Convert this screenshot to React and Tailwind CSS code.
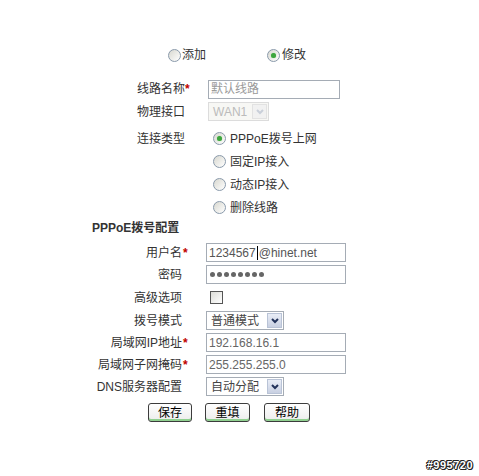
import React from "react";

const font = "font-['Liberation_Sans','Noto_Sans_CJK_SC',sans-serif]";

const Radio = ({ checked }) => (
  <span className="inline-flex h-[13px] w-[13px] shrink-0 items-center justify-center rounded-full border border-[#8a9aab] bg-gradient-to-br from-[#d8d8d0] to-white">
    {checked && <span className="h-[5px] w-[5px] rounded-full bg-[#3da53d] shadow-[0_0_1px_#7c7]" />}
  </span>
);

const Arrow = ({ disabled }) => (
  <span
    className={
      "flex h-[15px] w-[15px] items-center justify-center border " +
      (disabled ? "border-[#e2e2e2] bg-[#f1f1f1]" : "border-[#b9c3d6] bg-gradient-to-b from-[#e9edf6] to-[#c8d0e2]")
    }
  >
    <svg width="8" height="6" viewBox="0 0 8 6">
      <polyline
        points="1,1 4,4 7,1"
        fill="none"
        stroke={disabled ? "#c9cfd9" : "#22325a"}
        strokeWidth="2"
      />
    </svg>
  </span>
);

const Select = ({ value, width, disabled }) => (
  <div
    className={
      "flex h-[19px] items-center justify-between border pl-[4px] pr-[1px] " +
      (disabled ? "border-[#dcdcdc] bg-[#f7f7f4] text-[#bbbbbb]" : "border-[#a5acb5] bg-white text-[#444]")
    }
    style={{ width }}
  >
    <span className="text-[12px] leading-none">{value}</span>
    <Arrow disabled={disabled} />
  </div>
);

const Field = ({ children, width = 140, color = "text-[#555]" }) => (
  <div
    className={"flex h-[19px] items-center border border-[#a5acb5] bg-white pl-[2px] text-[12px] " + color}
    style={{ width }}
  >
    {children}
  </div>
);

const Star = ({ hidden }) => (
  <span className={"ml-[1px] inline-block w-[9px] text-left font-bold text-[#c00000] " + (hidden ? "invisible" : "")}>*</span>
);

const Row = ({ label, req, top, children }) => (
  <div className={"flex h-[19px] items-center " + top}>
    <div className="w-[192px] whitespace-nowrap text-right">
      {label}
      <Star hidden={!req} />
    </div>
    <div className="ml-[14px]">{children}</div>
  </div>
);

const Button = ({ label, w }) => (
  <button
    className="flex h-[19px] items-center justify-center rounded-[3px] border border-[#3c3c3c] bg-gradient-to-b from-white to-[#ececec] text-[12px] text-black shadow-[inset_0_-2px_0_#8fd08f]"
    style={{ width: w }}
  >
    {label}
  </button>
);

export default function App() {
  return (
    <div className={"relative h-[476px] w-[479px] overflow-hidden bg-white text-[12px] text-[#333] " + font}>
      {/* action choice */}
      <div className="mt-[48px] flex h-[14px] items-center pl-[168px]">
        <div className="flex w-[99px] items-center gap-[1px]">
          <Radio />
          <span>添加</span>
        </div>
        <div className="flex items-center gap-[2px]">
          <Radio checked />
          <span>修改</span>
        </div>
      </div>

      {/* line */}
      <div className="mt-[18px] pl-[137px]">
        <div className="flex h-[18px] items-center">
          <div className="w-[71px] whitespace-nowrap">
            线路名称<span className="font-bold text-[#c00000]">*</span>
          </div>
          <Field width={132} color="text-[#9a9a9a]">默认线路</Field>
        </div>
        <div className="mt-[4px] flex h-[19px] items-center">
          <div className="w-[71px]">物理接口</div>
          <Select value="WAN1" width={61} disabled />
        </div>
        <div className="mt-[6px] flex">
          <div className="flex h-[23px] w-[76px] items-center">连接类型</div>
          <div className="flex flex-col">
            {[
              ["PPPoE拨号上网", true],
              ["固定IP接入", false],
              ["动态IP接入", false],
              ["删除线路", false],
            ].map(([t, c]) => (
              <div key={t} className="flex h-[23px] items-center gap-[4px]">
                <Radio checked={c} />
                <span>{t}</span>
              </div>
            ))}
          </div>
        </div>
      </div>

      {/* PPPoE */}
      <div className="mt-[3px] flex h-[12px] items-center pl-[92px] font-bold">PPPoE拨号配置</div>

      <Row label="用户名" req top="mt-[9px]">
        <Field>
          1234567
          <span className="mx-[1px] inline-block h-[14px] w-[1px] bg-black" />
          @hinet.net
        </Field>
      </Row>
      <Row label="密码" top="mt-[3px]">
        <Field>
          <div className="flex gap-[2px] pl-[1px]">
            {[0, 1, 2, 3, 4, 5, 6, 7].map((i) => (
              <span key={i} className="h-[5px] w-[5px] rounded-full bg-[#666]" />
            ))}
          </div>
        </Field>
      </Row>
      <Row label="高级选项" top="mt-[4px]">
        <span className="ml-[4px] block h-[13px] w-[13px] border border-[#555] bg-gradient-to-br from-[#dcdcd7] to-white" />
      </Row>
      <Row label="拨号模式" top="mt-[4px]">
        <Select value="普通模式" width={78} />
      </Row>
      <Row label="局域网IP地址" req top="mt-[3px]">
        <Field color="text-[#666]">192.168.16.1</Field>
      </Row>
      <Row label="局域网子网掩码" req top="mt-[3px]">
        <Field color="text-[#666]">255.255.255.0</Field>
      </Row>
      <Row label="DNS服务器配置" top="mt-[3px]">
        <Select value="自动分配" width={78} />
      </Row>

      <div className="mt-[7px] flex pl-[148px]">
        <Button label="保存" w={44} />
        <div className="ml-[13px]">
          <Button label="重填" w={45} />
        </div>
        <div className="ml-[14px]">
          <Button label="帮助" w={46} />
        </div>
      </div>

      <div className="absolute right-[6px] bottom-[3px] text-[11px] font-bold tracking-[0.5px] text-white [text-shadow:1px_0_0_#222,-1px_0_0_#222,0_1px_0_#222,0_-1px_0_#222,1px_1px_0_#222,-1px_-1px_0_#222]">
        #995720
      </div>
    </div>
  );
}
